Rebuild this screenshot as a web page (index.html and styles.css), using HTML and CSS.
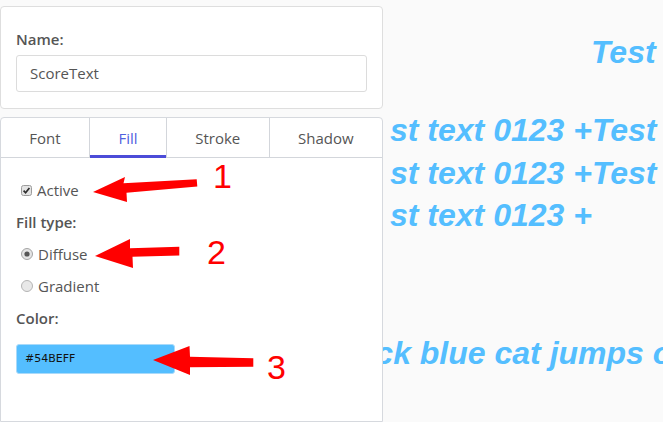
FILE: index.html
```html
<!DOCTYPE html>
<html>
<head>
<meta charset="utf-8">
<link rel="stylesheet" href="styles.css">
</head>
<body>
<div class="sidebar">
  <div class="card">
    <div class="label">Name:</div>
    <div class="text-input">ScoreText</div>
  </div>
  <div class="panel">
    <div class="tabs">
      <div class="tab">Font</div>
      <div class="tab active">Fill</div>
      <div class="tab">Stroke</div>
      <div class="tab">Shadow</div>
    </div>
    <div class="tab-body">
      <div class="row option">
        <svg class="box" width="11" height="11" viewBox="0 0 11 11"><rect x="0.5" y="0.5" width="10" height="10" rx="2" fill="#e4e4e4" stroke="#9c9c9c"/><path d="M2.6 5.6 L4.6 7.8 L8.4 2.9" fill="none" stroke="#2e2e2e" stroke-width="1.7"/></svg>
        <span>Active</span>
      </div>
      <div class="row label">Fill type:</div>
      <div class="row option">
        <svg class="radio" width="12" height="12" viewBox="0 0 12 12"><circle cx="6" cy="6" r="5.5" fill="#e4e4e4" stroke="#a4a4a4"/><circle cx="6" cy="6" r="2.6" fill="#555"/></svg>
        <span>Diffuse</span>
      </div>
      <div class="row option">
        <svg class="radio" width="12" height="12" viewBox="0 0 12 12"><circle cx="6" cy="6" r="5.5" fill="#e8e8e8" stroke="#b4b4b4"/></svg>
        <span>Gradient</span>
      </div>
      <div class="row label">Color:</div>
      <div class="color-input">#54BEFF</div>
    </div>
  </div>
</div>
<div class="preview">
  <div class="line solo">Test</div>
  <div class="block">
    <div class="line wrap">st text 0123 +Test</div>
    <div class="line wrap">st text 0123 +Test</div>
    <div class="line wrap">st text 0123 +</div>
  </div>
  <div class="line tail">Quick blue cat jumps over</div>
</div>
<svg class="annotations" width="663" height="422" viewBox="0 0 663 422">
  <polygon points="93,192 125,177 123.5,183.3 196.7,179.3 197.3,186.5 126.5,192.8 127,202" fill="#ff0000"/>
  <polygon points="95,256 130,239 130,248.3 179.3,246.7 179.3,255.5 132.5,256.8 133,268" fill="#ff0000"/>
  <polygon points="153,360 189.5,346 190,356.7 253.3,358.3 253.3,366.7 190,367.3 190,375" fill="#ff0000"/>
  <text x="213" y="187.5" class="num">1</text>
  <text x="207" y="263.5" class="num">2</text>
  <text x="267" y="379" class="num">3</text>
</svg>
</body>
</html>
```
FILE: styles.css
```css
html, body {
  margin: 0;
  padding: 0;
}
body {
  width: 663px;
  height: 422px;
  overflow: hidden;
  background: #fafafa;
  display: flex;
  position: relative;
  font-family: "Open Sans", "Noto Sans", sans-serif;
  font-size: 15px;
  color: #555;
}
.sidebar {
  width: 383px;
  flex: none;
  padding-top: 6px;
  display: flex;
  flex-direction: column;
  gap: 8px;
}
.card {
  background: #fff;
  border: 1px solid #dedede;
  border-radius: 4px;
  padding: 22px 15px 16px 15px;
}
.label {
  font-weight: 600;
  line-height: 21px;
}
.card .label {
  margin-bottom: 5px;
}
.text-input {
  height: 35px;
  border: 1px solid #dcdcdc;
  border-radius: 3px;
  padding-left: 13px;
  line-height: 35px;
  color: #555;
}
.panel {
  flex: 1;
  background: #fff;
  border: 1px solid #d6d9de;
  border-radius: 4px 4px 0 0;
}
.tabs {
  display: flex;
  height: 39px;
  border-bottom: 1px solid #d3d6db;
}
.tab {
  flex: 1 1 auto;
  text-align: center;
  line-height: 40px;
  border-right: 1px solid #d3d6db;
  color: #555;
}
.tab:last-child {
  border-right: none;
}
.tab.active {
  color: #5060e0;
  box-shadow: inset 0 -3px 0 #4c4cd8;
  margin-bottom: -1px;
}
.tab-body {
  padding: 16px 15px;
}
.row {
  height: 32px;
  line-height: 32px;
  display: flex;
  align-items: center;
}
.option {
  padding-left: 5px;
  gap: 5px;
}
.color-input {
  margin-top: 10px;
  width: 149px;
  height: 28px;
  border: 1px solid #a9dafa;
  border-radius: 3px;
  background: #54beff;
  padding-left: 8px;
  line-height: 28px;
  font-family: "DejaVu Sans", "Liberation Sans", sans-serif;
  font-size: 11px;
  color: #111;
}
.preview {
  flex: 1;
  overflow: hidden;
  padding-top: 36px;
  font-family: "Liberation Sans", Arial, sans-serif;
  font-weight: bold;
  font-style: italic;
  font-size: 32px;
  color: #54beff;
  white-space: nowrap;
}
.line {
  line-height: 32px;
}
.solo {
  padding-left: 208px;
}
.block {
  margin-top: 41px;
}
.wrap {
  line-height: 42.5px;
  padding-left: 7px;
}
.tail {
  margin-top: 100px;
  margin-left: -61px;
}
.annotations {
  position: absolute;
  left: 0;
  top: 0;
  pointer-events: none;
}
.num {
  font-family: "Liberation Sans", Arial, sans-serif;
  font-size: 34px;
  fill: #ff0000;
}
```
